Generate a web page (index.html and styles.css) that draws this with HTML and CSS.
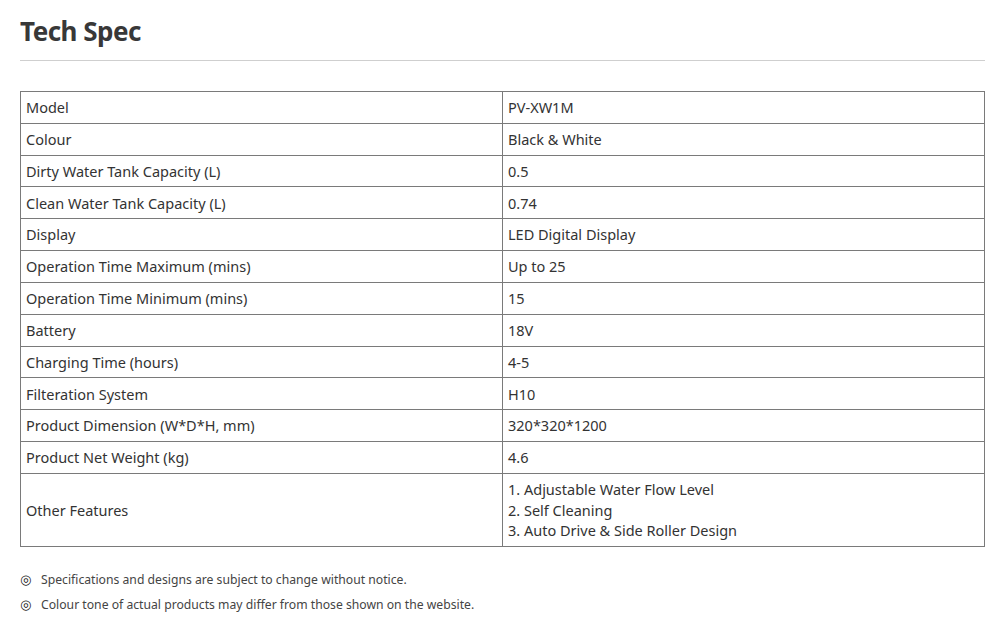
FILE: index.html
```html
<!DOCTYPE html>
<html>
<head>
<meta charset="utf-8">
<link rel="stylesheet" href="styles.css">
</head>
<body>
<div class="page">
  <h2 class="title">Tech Spec</h2>
  <hr class="rule">
  <table class="spec">
    <tr><td class="k">Model</td><td>PV-XW1M</td></tr>
    <tr><td class="k">Colour</td><td>Black &amp; White</td></tr>
    <tr><td class="k">Dirty Water Tank Capacity (L)</td><td>0.5</td></tr>
    <tr><td class="k">Clean Water Tank Capacity (L)</td><td>0.74</td></tr>
    <tr><td class="k">Display</td><td>LED Digital Display</td></tr>
    <tr><td class="k">Operation Time Maximum (mins)</td><td>Up to 25</td></tr>
    <tr><td class="k">Operation Time Minimum (mins)</td><td>15</td></tr>
    <tr><td class="k">Battery</td><td>18V</td></tr>
    <tr><td class="k">Charging Time (hours)</td><td>4-5</td></tr>
    <tr><td class="k">Filteration System</td><td>H10</td></tr>
    <tr><td class="k">Product Dimension (W*D*H, mm)</td><td>320*320*1200</td></tr>
    <tr><td class="k">Product Net Weight (kg)</td><td>4.6</td></tr>
    <tr class="multi"><td class="k">Other Features</td><td>1. Adjustable Water Flow Level<br>2. Self Cleaning<br>3. Auto Drive &amp; Side Roller Design</td></tr>
  </table>
  <ul class="notes">
    <li><span class="mark">◎</span>Specifications and designs are subject to change without notice.</li>
    <li><span class="mark">◎</span>Colour tone of actual products may differ from those shown on the website.</li>
  </ul>
</div>
</body>
</html>
```
FILE: styles.css
```css
html, body { margin: 0; padding: 0; background: #fff; }
body { font-family: "Noto Sans", "Open Sans", sans-serif; color: #333; }
.page { padding: 0 20px; }
.title {
  margin: 0;
  padding-top: 14px;
  font-size: 26px;
  line-height: 34px;
  font-weight: 700;
  color: #383838;
  letter-spacing: -0.5px;
}
.rule {
  border: 0;
  border-top: 1px solid #cfcfcf;
  margin: 12px 0 30px;
}
.spec {
  width: 965px;
  border-collapse: collapse;
  font-size: 14.5px;
  color: #333;
}
.spec td {
  border: 1px solid #7a7a7a;
  padding: 0 5px;
  height: 30.83px;
  line-height: 20.5px;
  vertical-align: middle;
}
.spec td.k { width: 471px; }
.spec .multi td { height: 72px; }
.notes {
  list-style: none;
  margin: 25px 0 0;
  padding: 0;
  font-size: 12.2px;
  color: #444;
}
.notes li { display: flex; align-items: baseline; line-height: 16px; margin-bottom: 9px; }
.mark { width: 21px; font-size: 13px; color: #222; flex: none; font-family: "DejaVu Sans", sans-serif; }
```
